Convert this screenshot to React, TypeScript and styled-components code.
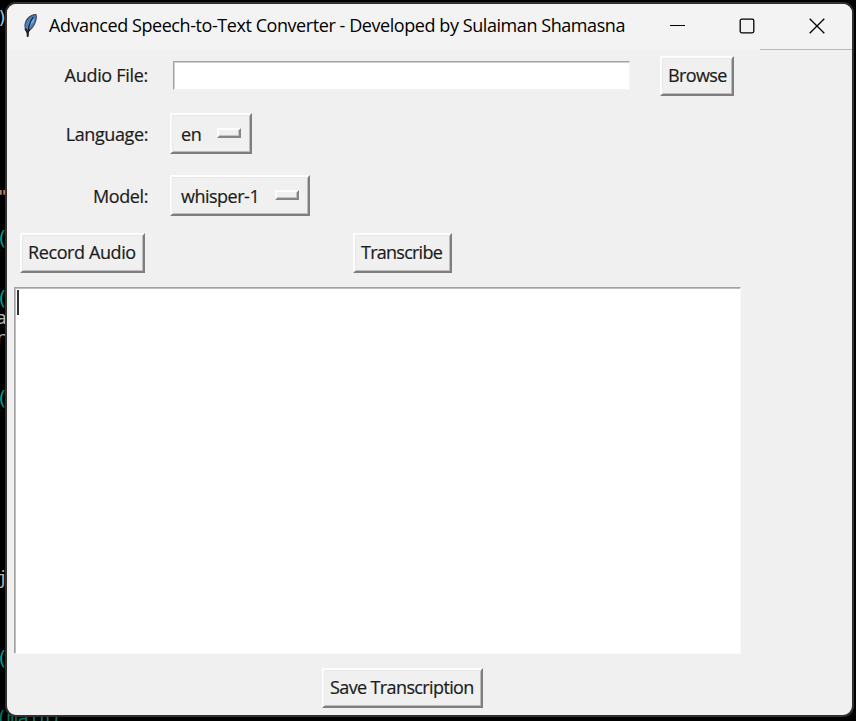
import React from "react";
import styled, { createGlobalStyle } from "styled-components";

const GlobalStyle = createGlobalStyle`
  * { box-sizing: border-box; }
  html, body { margin: 0; background: #000; overflow: hidden; }
`;

const Desktop = styled.div`
  position: relative;
  width: 856px;
  height: 721px;
  background: #000;
  overflow: hidden;
  font-family: "Open Sans", "Noto Sans", sans-serif;
`;

const CodeFragment = styled.span<{ $x: number; $y: number; $color: string; $size?: number }>`
  position: absolute;
  left: ${(p) => p.$x}px;
  top: ${(p) => p.$y}px;
  color: ${(p) => p.$color};
  font: ${(p) => p.$size ?? 18}px/20px "DejaVu Sans Mono", monospace;
  white-space: pre;
`;

const Window = styled.main`
  position: absolute;
  left: 5px;
  top: 2px;
  width: 849px;
  height: 715px;
  border: 2px solid #303030;
  border-radius: 11px;
  background: #f0f0f0;
  overflow: hidden;
`;

const TitleBar = styled.header`
  display: flex;
  align-items: center;
  height: 46px;
  padding-left: 14px;
  background: #f3f3f3;
`;

const Title = styled.h1`
  flex: 1;
  margin: -4px 0 0 9px;
  color: #000;
  font-size: 18px;
  line-height: 24px;
  font-weight: 400;
  letter-spacing: -0.43px;
  white-space: nowrap;
`;

const WindowControls = styled.div`
  display: flex;
  gap: 54px;
  margin: -3px 27px 0 0;
  svg { display: block; }
`;

const Seam = styled.div`
  height: 1px;
  margin: -1px 0 0 753px;
  background: #b9b9b9;
`;

const Content = styled.div`
  display: flex;
  flex-direction: column;
  align-items: flex-start;
`;

const Row = styled.div<{ $top: number; $left?: number }>`
  display: flex;
  align-items: center;
  margin-top: ${(p) => p.$top}px;
  margin-left: ${(p) => p.$left ?? 0}px;
`;

const Label = styled.label<{ $spacing: number }>`
  width: 141px;
  margin-right: 22px;
  text-align: right;
  color: #1c1c1c;
  font-size: 18px;
  line-height: 24px;
  letter-spacing: ${(p) => p.$spacing}px;
  -webkit-text-stroke: 0.2px #1c1c1c;
  white-space: nowrap;
`;

const FileLabel = styled(Label)`
  padding-bottom: 2px;
`;

const Entry = styled.input`
  width: 457px;
  height: 29px;
  margin: 0 30px 2px 3px;
  padding: 0 4px;
  border: 1px solid;
  border-color: #a3a3a3 #f4f4f4 #f4f4f4 #a3a3a3;
  border-radius: 0;
  background: #fff;
  box-shadow: inset 1px 1px #cfcfcf;
  outline: none;
`;

const Button = styled.button<{ $width: number; $height?: number; $spacing: number }>`
  display: flex;
  align-items: center;
  width: ${(p) => p.$width}px;
  height: ${(p) => p.$height ?? 40}px;
  padding: 0 0 2px 6px;
  border: 2px solid;
  border-color: #fdfdfd #7e7e7e #7e7e7e #fdfdfd;
  border-radius: 0;
  background: #f0f0f0;
  box-shadow: inset 1px 1px #e8e8e8, inset -1px -1px #bdbdbd;
  color: #1c1c1c;
  font: 18px/24px "Open Sans", "Noto Sans", sans-serif;
  letter-spacing: ${(p) => p.$spacing}px;
  -webkit-text-stroke: 0.2px #1c1c1c;
  white-space: nowrap;
`;

const OptionButton = styled(Button)`
  justify-content: space-between;
  padding: 0 9px 0;
`;

const Indicator = styled.span`
  width: 24px;
  height: 10px;
  margin-top: -2px;
  border: 2px solid;
  border-color: #fdfdfd #858585 #858585 #fdfdfd;
  box-shadow: inset -1px -1px #c4c4c4;
`;

const TextArea = styled.div`
  width: 727px;
  height: 367px;
  margin: 14px 0 0 7px;
  padding: 2px;
  border: 1px solid;
  border-color: #a3a3a3 #f9f9f9 #f9f9f9 #a3a3a3;
  background: #fff;
  box-shadow: inset 1px 1px #bdbdbd;
`;

const Caret = styled.div`
  width: 2px;
  height: 25px;
  background: #333;
`;

const Feather = () => (
  <svg width="19" height="26" viewBox="0 0 19 26">
    <g transform="translate(-1 -2)">
      <path d="M15.8 2.300c1.100 3 .4 6.100-1.200 9.400-1.600 3.400-4 5.800-6.200 6.700l-.2 5.300-.9.2-.2-4.900c-2.400-2.200-2.500-6.100-1.200-9.600C7.500 6 11.500 3 15.800 2.300Z" fill="#4a83c8" stroke="#454950" strokeWidth="1.200" />
      <path d="M14 4.500C10.700 7 8.600 12 7.600 18l3.200-5.300L13.600 10c.8-2 .8-3.900.4-5.500Z" fill="#74aeea" />
      <path d="M13.500 5C9.900 9 8 14 7.600 25" fill="none" stroke="#17212e" strokeWidth="1.200" />
      <path d="M5.200 16.500l2.200 4 2.400-3" fill="none" stroke="#1a1d22" strokeWidth="1.800" />
    </g>
  </svg>
);

const fragments = [
  { text: ")", x: -3, y: 8, color: "#9cc8e8" },
  { text: '"', x: -3, y: 187, color: "#ce9178" },
  { text: "(", x: -4, y: 228, color: "#009b87", size: 20 },
  { text: "(", x: -4, y: 288, color: "#009b87", size: 20 },
  { text: "a", x: -4, y: 308, color: "#b8b8b8" },
  { text: "r", x: -5, y: 328, color: "#b8a9a0" },
  { text: "(", x: -4, y: 388, color: "#009b87", size: 20 },
  { text: "j", x: -3, y: 568, color: "#b8b8b8" },
  { text: "(", x: -4, y: 648, color: "#009b87", size: 20 },
  { text: "(main)", x: -4, y: 708, color: "#007a68" },
];

export default function App() {
  return (
    <>
      <GlobalStyle />
      <Desktop>
        {fragments.map((f) => (
          <CodeFragment key={f.y} $x={f.x} $y={f.y} $color={f.color} $size={f.size}>
            {f.text}
          </CodeFragment>
        ))}
        <Window>
          <TitleBar>
            <Feather />
            <Title>Advanced Speech-to-Text Converter - Developed by Sulaiman Shamasna</Title>
            <WindowControls>
              <svg width="15" height="16" viewBox="0 0 15 16"><path d="M0 7.500h15" stroke="#000" /></svg>
              <svg width="16" height="16" viewBox="0 0 16 16"><rect x="1.200" y="1.200" width="13.600" height="13.600" rx="1.500" fill="none" stroke="#000" strokeWidth="1.300" /></svg>
              <svg width="16" height="16" viewBox="0 0 16 16"><path d="M.7.700l14.600 14.600M15.300.700.700 15.300" stroke="#000" strokeWidth="1.300" /></svg>
            </WindowControls>
          </TitleBar>
          <Seam />
          <Content>
            <Row $top={6}>
              <FileLabel $spacing={-0.3} htmlFor="file">Audio File:</FileLabel>
              <Entry id="file" />
              <Button $width={74} $spacing={-0.6}>Browse</Button>
            </Row>
            <Row $top={17}>
              <Label $spacing={-0.4}>Language:</Label>
              <OptionButton $width={82} $height={41} $spacing={-0.4}>en<Indicator /></OptionButton>
            </Row>
            <Row $top={21}>
              <Label $spacing={-0.4}>Model:</Label>
              <OptionButton $width={140} $height={41} $spacing={-0.5}>whisper-1<Indicator /></OptionButton>
            </Row>
            <Row $top={17} $left={13}>
              <Button $width={125} $spacing={-0.4}>Record Audio</Button>
              <Row $top={0} $left={208}>
                <Button $width={99} $spacing={-0.75}>Transcribe</Button>
              </Row>
            </Row>
            <TextArea><Caret /></TextArea>
            <Row $top={14} $left={315}>
              <Button $width={161} $spacing={-0.62}>Save Transcription</Button>
            </Row>
          </Content>
        </Window>
      </Desktop>
    </>
  );
}
